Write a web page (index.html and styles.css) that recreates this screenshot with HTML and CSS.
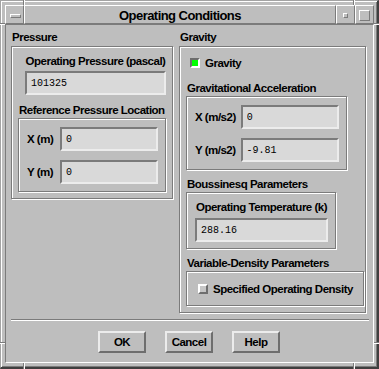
FILE: index.html
```html
<!DOCTYPE html>
<html>
<head>
    <meta name="viewport" content="width=device-width, initial-scale=1.0">
    <title>Operating Conditions</title>
    <link rel="stylesheet" href="styles.css">
</head>
<body>
    <div class="window">
        <span class="mark mark-v mark-top-left"></span>
        <span class="mark mark-v mark-top-right"></span>
        <span class="mark mark-v mark-bottom-left"></span>
        <span class="mark mark-v mark-bottom-right"></span>
        <span class="mark mark-h mark-left-top"></span>
        <span class="mark mark-h mark-left-bottom"></span>
        <span class="mark mark-h mark-right-top"></span>
        <span class="mark mark-h mark-right-bottom"></span>

        <div class="titlebar">
            <div class="tb-cell tb-menu"><span class="menu-glyph"></span></div>
            <div class="tb-cell tb-title">Operating Conditions</div>
            <div class="tb-cell tb-min"><span class="min-glyph"></span></div>
            <div class="tb-cell tb-max"><span class="max-glyph"></span></div>
        </div>

        <div class="client">
            <div class="panes">
                <div class="pane pane-left">
                    <div class="heading heading-top">Pressure</div>
                    <div class="group group-pressure">
                        <div class="field field-pressure">
                            <div class="field-label">Operating Pressure (pascal)</div>
                            <input type="text" class="entry entry-pressure" value="101325" readonly>
                        </div>
                        <div class="heading heading-ref">Reference Pressure Location</div>
                        <div class="group inner">
                            <div class="row">
                                <span class="row-label row-label-m">X (m)</span>
                                <input type="text" class="entry entry-small" value="0" readonly>
                            </div>
                            <div class="row">
                                <span class="row-label row-label-m">Y (m)</span>
                                <input type="text" class="entry entry-small" value="0" readonly>
                            </div>
                        </div>
                    </div>
                </div>

                <div class="pane pane-right">
                    <div class="heading heading-top">Gravity</div>
                    <div class="group group-gravity">
                        <div class="check-row check-gravity"><span class="check checked"></span>Gravity</div>

                        <div class="heading sub sub-first">Gravitational Acceleration</div>
                        <div class="group inner">
                            <div class="row">
                                <span class="row-label">X (m/s2)</span>
                                <input type="text" class="entry entry-small" value="0" readonly>
                            </div>
                            <div class="row">
                                <span class="row-label">Y (m/s2)</span>
                                <input type="text" class="entry entry-small" value="-9.81" readonly>
                            </div>
                        </div>

                        <div class="heading sub">Boussinesq Parameters</div>
                        <div class="group inner bouss">
                            <div class="field field-temp">
                                <div class="field-label">Operating Temperature (k)</div>
                                <input type="text" class="entry entry-temp" value="288.16" readonly>
                            </div>
                        </div>

                        <div class="heading sub">Variable-Density Parameters</div>
                        <div class="group inner density">
                            <div class="check-row"><span class="check"></span>Specified Operating Density</div>
                        </div>
                    </div>
                </div>
            </div>

            <div class="separator"></div>

            <div class="buttons">
                <button type="button">OK</button>
                <button type="button">Cancel</button>
                <button type="button">Help</button>
            </div>
        </div>
    </div>
</body>
</html>
```

FILE: styles.css
```css
body {
    margin: 0;
    background-color: #bebebe;
    font-family: "Liberation Sans", Arial, sans-serif;
    font-weight: bold;
    color: #000;
}

.window {
    position: relative;
    width: 379px;
    height: 369px;
    box-sizing: border-box;
    display: flex;
    flex-direction: column;
    background-color: #bebebe;
    border-style: solid;
    border-width: 1px 2px 2px 1px;
    border-color: #a3a3a3 #3f3f3f #3f3f3f #a3a3a3;
    padding: 4px 3px 4px 4px;
    box-shadow: inset 1px 1px 0 #fff, inset -1px -1px 0 #7b7b7b;
}

/* resize corner marks on the frame */
.mark {
    position: absolute;
    background-color: #7b7b7b;
}

.mark-v {
    width: 1px;
    box-shadow: 1px 0 0 #fff;
}

.mark-h {
    height: 1px;
    width: 5px;
    box-shadow: 0 1px 0 #fff;
}

.mark-top-left { left: 22px; top: -1px; height: 5px; }
.mark-top-right { left: 352px; top: -1px; height: 5px; }
.mark-bottom-left { left: 22px; bottom: -2px; height: 6px; }
.mark-bottom-right { left: 352px; bottom: -2px; height: 6px; }
.mark-left-top { left: -1px; top: 22px; }
.mark-left-bottom { left: -1px; top: 341px; }
.mark-right-top { right: -2px; top: 22px; }
.mark-right-bottom { right: -2px; top: 341px; }

.titlebar {
    display: flex;
    height: 19px;
}

.tb-cell {
    box-sizing: border-box;
    display: flex;
    align-items: center;
    justify-content: center;
    border: 1px solid;
    border-color: #fff #7b7b7b #7b7b7b #fff;
}

.tb-menu,
.tb-min,
.tb-max {
    width: 19px;
}

.tb-title {
    flex: 1;
    font-size: 13px;
    letter-spacing: -0.55px;
    line-height: 15px;
    padding-top: 2px;
    white-space: nowrap;
}

.menu-glyph,
.min-glyph,
.max-glyph {
    display: block;
    box-sizing: border-box;
    border: 1px solid;
    border-color: #fff #7b7b7b #7b7b7b #fff;
}

.menu-glyph {
    width: 11px;
    height: 4px;
    margin-left: 2px;
    margin-top: 2px;
}

.min-glyph {
    width: 5px;
    height: 5px;
    margin-top: 2px;
}

.max-glyph {
    width: 11px;
    height: 11px;
    margin-top: 2px;
}

.client {
    flex: 1;
    display: flex;
    flex-direction: column;
    border: 1px solid;
    border-color: #7b7b7b #fff #fff #7b7b7b;
    padding: 6px 4px 9px 5px;
}

.panes {
    display: flex;
    align-items: flex-start;
    gap: 6px;
    padding-right: 3px;
}

.pane-left {
    width: 162px;
}

.pane-right {
    flex: 1;
    min-width: 0;
}

.heading,
.field-label,
.row-label,
.check-row {
    font-size: 11.5px;
    letter-spacing: -0.5px;
    line-height: 13px;
    white-space: nowrap;
}

.heading {
    padding-left: 1px;
}

.heading-top {
    margin-bottom: 2px;
}

.group {
    border: 1px solid #7b7b7b;
    box-shadow: 1px 1px 0 #fff, inset 1px 1px 0 #fff;
}

.group-pressure {
    padding: 8px 6px 6px 6px;
}

.group-gravity {
    display: flex;
    flex-direction: column;
    align-items: flex-start;
    padding: 9px 6px 6px 6px;
}

.field-label {
    text-align: center;
    margin-bottom: 3px;
}

.field-pressure {
    width: 141px;
    margin-left: 7px;
}

.field-temp {
    width: 133px;
}

.field-temp .field-label {
    margin-bottom: 4px;
}

.entry {
    display: block;
    box-sizing: border-box;
    height: 24px;
    margin: 0;
    padding: 0 4px;
    border: 2px solid;
    border-color: #7b7b7b #ececec #ececec #7b7b7b;
    background-color: #d9d9d9;
    font-family: "Liberation Mono", "Courier New", monospace;
    font-size: 10px;
    font-weight: normal;
    color: #000;
    outline: none;
}

.entry-pressure { width: 141px; }
.entry-small { width: 98px; }
.entry-temp { width: 133px; }

.heading-ref {
    margin-top: 9px;
    margin-bottom: 1px;
}

.inner {
    width: fit-content;
    display: flex;
    flex-direction: column;
    gap: 9px;
    padding: 8px 7px 7px 8px;
}

.row {
    display: flex;
    align-items: center;
    gap: 5px;
}

.row-label-m {
    min-width: 28px;
}

.sub {
    margin-top: 8px;
    margin-bottom: 1px;
}

.sub-first {
    margin-top: 12px;
}

.check-row {
    display: flex;
    align-items: center;
    height: 14px;
    line-height: 14px;
}

.check-gravity {
    padding-left: 4px;
}

.check {
    width: 10px;
    height: 10px;
    box-sizing: border-box;
    margin-right: 5px;
    border: 2px solid;
    border-color: #fff #6e6e6e #6e6e6e #fff;
    background-color: #c6c6c6;
}

.check.checked {
    border-color: #6e6e6e #fff #fff #6e6e6e;
    background-color: #00ff00;
}

.bouss {
    padding: 8px 7px 6px 8px;
}

.density {
    padding: 10px 10px 9px 11px;
}

.separator {
    margin-top: 6px;
    border-top: 1px solid #7b7b7b;
    border-bottom: 1px solid #fff;
}

.buttons {
    display: flex;
    justify-content: center;
    gap: 19px;
    margin-top: 10px;
    padding-right: 2px;
}

.buttons button {
    width: 48px;
    height: 22px;
    box-sizing: border-box;
    padding: 0;
    border: 2px solid;
    border-color: #ececec #6e6e6e #6e6e6e #ececec;
    background-color: #bebebe;
    font-family: "Liberation Sans", Arial, sans-serif;
    font-weight: bold;
    font-size: 11.5px;
    letter-spacing: -0.5px;
    color: #000;
}
```
